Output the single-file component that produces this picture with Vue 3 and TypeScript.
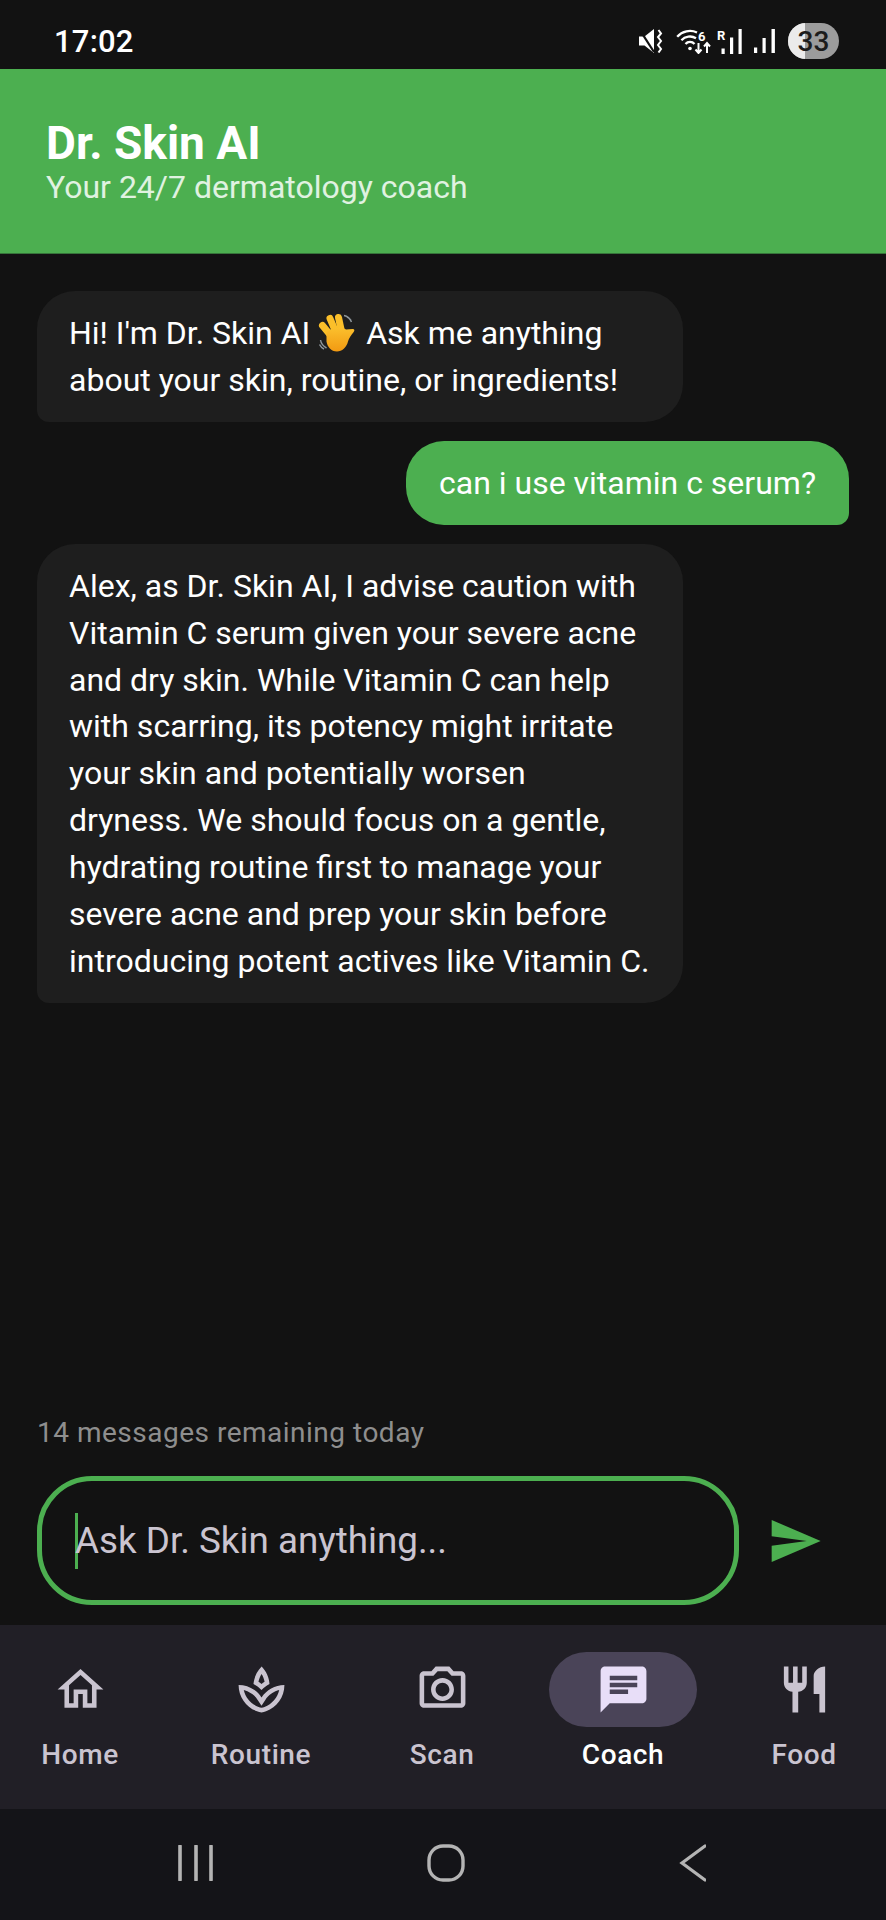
<script setup lang="ts">
interface Tab { label: string; path: string; active?: boolean }
const tabs: Tab[] = [
  { label: 'Home', path: 'M12 5.69l5 4.5V18h-2v-6H9v6H7v-7.81l5-4.5M12 3L2 12h3v8h6v-6h2v6h6v-8h3L12 3z' },
  { label: 'Routine', path: 'M15.49 9.63c-.18-2.79-1.31-5.51-3.43-7.63-2.14 2.14-3.32 4.86-3.55 7.63 1.28.68 2.46 1.56 3.49 2.63 1.03-1.06 2.21-1.94 3.49-2.63zm-3.44-4.44c.63 1.03 1.07 2.18 1.3 3.38-.47.3-.91.63-1.34.98-.42-.34-.87-.67-1.33-.97.25-1.2.71-2.35 1.37-3.39zM12 15.45c-.82-1.25-1.86-2.34-3.06-3.2-.13-.09-.27-.16-.4-.26.13.09.27.17.39.25C6.98 10.83 4.59 10 2 10c0 5.32 3.36 9.82 8.03 11.49.63.23 1.29.4 1.97.51.68-.12 1.33-.29 1.97-.51C18.64 19.82 22 15.32 22 10c-4.18 0-7.85 2.18-10 5.45zm1.32 4.15c-.44.15-.88.27-1.33.37-.44-.09-.87-.21-1.28-.36-3.29-1.18-5.7-3.99-6.45-7.35 1.1.26 2.15.71 3.12 1.33l-.02.01c.13.09.26.18.39.25l.07.03c.99.72 1.84 1.61 2.51 2.65L12 19.1l1.67-2.55c.69-1.05 1.55-1.95 2.53-2.66l.07-.05c.09-.05.18-.11.27-.17l-.01-.02c.98-.65 2.07-1.13 3.21-1.4-.75 3.37-3.15 6.18-6.42 7.35z' },
  { label: 'Scan', path: 'M14.12 4l1.83 2H20v12H4V6h4.05l1.83-2h4.24M15 2H9L7.17 4H4c-1.1 0-2 .9-2 2v12c0 1.1.9 2 2 2h16c1.1 0 2-.9 2-2V6c0-1.1-.9-2-2-2h-3.17L15 2zm-3 7c1.65 0 3 1.35 3 3s-1.35 3-3 3-3-1.35-3-3 1.35-3 3-3m0-2c-2.76 0-5 2.24-5 5s2.24 5 5 5 5-2.24 5-5-2.24-5-5-5z' },
  { label: 'Coach', active: true, path: 'M20 2H4c-1.1 0-1.99.9-1.99 2L2 22l4-4h14c1.1 0 2-.9 2-2V4c0-1.1-.9-2-2-2zM6 9h12v2H6V9zm8 5H6v-2h8v2zm4-6H6V6h12v2z' },
  { label: 'Food', path: 'M11 9H9V2H7v7H5V2H3v7c0 2.12 1.66 3.84 3.75 3.97V22h2.5v-9.03C11.34 12.84 13 11.12 13 9V2h-2v7zm5-3v8h2.5v8H21V2c-2.76 0-5 2.24-5 4z' },
]
</script>

<template>
  <div class="app">
    <div class="status">
      <span class="time">17:02</span>
      <div class="status-icons">
        <svg width="24" height="24" viewBox="0 0 24 24" class="mute">
          <path d="M0 7.5h5.5L15 0v24l-9.500-7.500H0z" fill="#fff" />
          <path d="M0.500 0.500L15 23" stroke="#121212" stroke-width="2.2" />
          <path d="M19.500 1l2.500 3.500-3 3.500 3 4-3 4 3 4-2.500 3.500" fill="none" stroke="#fff" stroke-width="2" />
        </svg>
        <svg width="36" height="26" viewBox="0 0 36 26" class="wifi">
          <path d="M1.200 8.800A17 17 0 0 1 21 4.500M5.400 12.300A11.500 11.500 0 0 1 20 10.200M9.500 16A6 6 0 0 1 18.500 16" fill="none" stroke="#fff" stroke-width="2.300" />
          <circle cx="14" cy="20.500" r="1.800" fill="#fff" />
          <path d="M22.500 15v10M19.500 21.500l3 3.500 3-3.500M31 25V15M28 18.500l3-3.500 3 3.500" fill="none" stroke="#fff" stroke-width="2" />
          <text x="22" y="12.500" class="tiny">6</text>
        </svg>
        <svg width="25" height="26" viewBox="0 0 25 26" class="sig">
          <text x="0" y="12" class="tiny">R</text>
          <path d="M4.500 20.500h3.200V26H4.500zM13 9.500h3.200V26H13zM21.500 1h3.200v25h-3.200z" fill="#fff" />
        </svg>
        <svg width="22" height="24" viewBox="0 0 22 24" class="sig2">
          <path d="M0 18.500h3.200V24H0zM8.500 9h3.200v15H8.500zM17.500 0h3.400v24h-3.400z" fill="#fff" />
        </svg>
        <div class="battery"><span class="battery-fill"></span><span class="battery-num">33</span></div>
      </div>
    </div>

    <header class="head">
      <h1>Dr. Skin AI</h1>
      <p>Your 24/7 dermatology coach</p>
    </header>

    <main class="messages">
      <div class="bubble bot">
        Hi! I'm Dr. Skin AI
        <svg class="wave" width="40" height="42" viewBox="10 9 40 42">
          <defs>
            <linearGradient id="handGrad" x1="0" y1="0" x2="0" y2="1">
              <stop offset="0" stop-color="#fbc02d" />
              <stop offset="1" stop-color="#f29a12" />
            </linearGradient>
          </defs>
          <g stroke="#fbbf2a" stroke-width="7" stroke-linecap="round">
            <path d="M14.500 22.500L24 34" />
            <path d="M22 15.500L29 32" />
            <path d="M30.500 14.500L34 31" />
          </g>
          <path d="M18.500 29c5-5 16-6 19.500-2.500l6.500-.5c2-.2 2.500 1.500 1 3.200C43 32 41 35 40 38.500c-1.500 6-6 10-11 10-6 0-9.500-4.500-10.500-10z" fill="url(#handGrad)" />
          <path d="M36 12.500c3 .5 6 3 7.500 6.500M39 14c2 .5 3 2 4 3.500M12.500 37c.5 3 2.500 6 6 8M11.500 41.500c1 2 2.500 3.500 4.500 4.500" stroke="#8e969c" stroke-width="1.500" fill="none" />
        </svg>
        Ask me anything about your skin, routine, or ingredients!
      </div>
      <div class="bubble user">can i use vitamin c serum?</div>
      <div class="bubble bot">
        Alex, as Dr. Skin AI, I advise caution with Vitamin C serum given your severe acne and dry skin. While Vitamin C can help with scarring, its potency might irritate your skin and potentially worsen dryness. We should focus on a gentle, hydrating routine first to manage your severe acne and prep your skin before introducing potent actives like Vitamin C.
      </div>
    </main>

    <div class="remaining">14 messages remaining today</div>

    <div class="compose">
      <div class="field">
        <span class="caret"></span>
        <span class="placeholder">Ask Dr. Skin anything...</span>
      </div>
      <svg class="send" width="56" height="56" viewBox="0 0 24 24">
        <path d="M2.010 21L23 12 2.010 3 2 10l15 2-15 2z" fill="#4caf50" />
      </svg>
    </div>

    <nav class="tabs">
      <div v-for="t in tabs" :key="t.label" class="tab" :class="{ active: t.active }">
        <div class="pill">
          <svg width="55" height="55" viewBox="0 0 24 24"><path :d="t.path" fill="currentColor" /></svg>
        </div>
        <span class="tab-label">{{ t.label }}</span>
      </div>
    </nav>

    <div class="sysnav">
      <svg width="36" height="36" viewBox="0 0 36 36">
        <path d="M2 1v34M18 1v34M33 1v34" stroke="#b4b4b4" stroke-width="3.600" stroke-linecap="round" fill="none" />
      </svg>
      <svg width="38" height="38" viewBox="0 0 38 38">
        <rect x="2" y="2" width="34" height="34" rx="14" stroke="#b4b4b4" stroke-width="3.400" fill="none" />
      </svg>
      <svg width="28" height="38" viewBox="0 0 28 38">
        <path d="M27 2L4 19l23 17" stroke="#b4b4b4" stroke-width="3.200" stroke-linecap="round" fill="none" />
      </svg>
    </div>
  </div>
</template>

<style>
body { margin: 0; background: #121212; }
</style>

<style scoped>
.app {
  width: 886px;
  height: 1920px;
  display: flex;
  flex-direction: column;
  background: #121212;
  font-family: Roboto, "Liberation Sans", sans-serif;
  color: #fff;
  overflow: hidden;
}
.status {
  height: 69px;
  flex: none;
  display: flex;
  align-items: center;
  justify-content: space-between;
  padding: 13px 47px 0 54px;
  box-sizing: border-box;
}
.time { font-size: 31px; font-weight: 500; letter-spacing: 0.2px; }
.status-icons { display: flex; align-items: center; }
.mute { margin-right: 13px; }
.wifi { margin-right: 5px; }
.sig { margin-right: 12px; }
.sig2 { margin-right: 12px; }
.tiny { font: 700 13px Roboto, sans-serif; fill: #fff; }
.battery {
  position: relative;
  width: 51px;
  height: 36px;
  border-radius: 18px;
  background: #9c9c9c;
  overflow: hidden;
  display: flex;
  align-items: center;
  justify-content: center;
}
.battery-fill { position: absolute; left: 0; top: 0; bottom: 0; width: 17px; background: #ebebeb; }
.battery-num { position: relative; color: #1c1c1c; font-size: 28px; font-weight: 500; }
.head {
  height: 185px;
  flex: none;
  box-sizing: border-box;
  background: #4caf50;
  border-bottom: 1px solid #36743a;
  padding: 49px 46px 0;
}
.head h1 { margin: 0; font-size: 46px; line-height: 50px; font-weight: 700; }
.head p { margin: 0; font-size: 32px; line-height: 38px; color: #e0f2e1; }
.messages {
  flex: 1;
  min-height: 0;
  box-sizing: border-box;
  padding: 37px 37px 0;
  display: flex;
  flex-direction: column;
  gap: 19px;
}
.bubble {
  box-sizing: border-box;
  font-size: 32px;
  line-height: 46.900px;
  padding: 18.600px 32px;
  border-radius: 38px;
}
.bot {
  width: 646px;
  background: #1e1e1e;
  border-bottom-left-radius: 12px;
}
.user {
  align-self: flex-end;
  background: #4caf50;
  padding-left: 33px;
  padding-right: 33px;
  border-bottom-right-radius: 12px;
}
.wave { vertical-align: -10px; }
.remaining {
  flex: none;
  padding: 0 37px;
  font-size: 28px;
  line-height: 34px;
  letter-spacing: 0.5px;
  color: #8e8e8e;
  margin-bottom: 26px;
}
.compose {
  flex: none;
  display: flex;
  align-items: center;
  padding: 0 0 0 37px;
  margin-bottom: 20px;
}
.field {
  width: 702px;
  height: 129px;
  box-sizing: border-box;
  border: 5px solid #4caf50;
  border-radius: 55px;
  padding-left: 33px;
  display: flex;
  align-items: center;
}
.caret { width: 3px; height: 56px; background: #4caf50; margin-right: -3px; }
.placeholder { font-size: 36.800px; color: #cac4d0; }
.send { margin-left: 28px; }
.tabs {
  flex: none;
  height: 184px;
  box-sizing: border-box;
  background: #211f26;
  display: grid;
  grid-template-columns: repeat(5, 160px);
  column-gap: 21px;
  padding-top: 27px;
}
.tab { display: flex; flex-direction: column; align-items: center; color: #cac4d0; }
.pill {
  width: 148px;
  height: 75px;
  border-radius: 38px;
  display: flex;
  align-items: center;
  justify-content: center;
}
.tab-label { margin-top: 11px; font-size: 28px; line-height: 34px; font-weight: 500; letter-spacing: 0.6px; }
.active .pill { background: #4a4458; color: #e8def8; }
.active .tab-label { color: #fff; }
.sysnav {
  flex: none;
  height: 111px;
  background: #141418;
  display: flex;
  align-items: center;
  box-sizing: border-box;
  padding: 0 180px 4px 178px;
  justify-content: space-between;
}
</style>
